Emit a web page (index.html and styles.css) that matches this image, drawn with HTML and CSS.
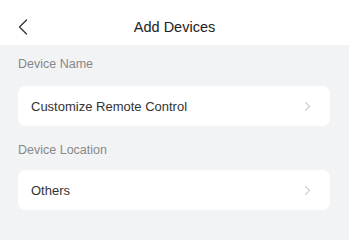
FILE: index.html
```
<!DOCTYPE html>
<html lang="en">
<head>
<meta charset="utf-8">
<title>Add Devices</title>
<link rel="stylesheet" href="styles.css">
</head>
<body>
<div class="page">
  <header class="navbar">
    <div class="nav-left">
      <svg class="back" width="10" height="16" viewBox="0 0 10 16" aria-hidden="true">
        <path d="M8.5 1 L1.5 8 L8.5 15" fill="none" stroke="#333" stroke-width="1.3" stroke-linecap="round" stroke-linejoin="round"/>
      </svg>
    </div>
    <div class="title">Add Devices</div>
    <div class="nav-right"></div>
  </header>
  <section class="group">
    <div class="group-label">Device Name</div>
    <div class="cell">
      <span class="cell-text">Customize Remote Control</span>
      <svg class="arrow" width="7" height="11" viewBox="0 0 7 11" aria-hidden="true">
        <path d="M1.5 1.5 L5.5 5.5 L1.5 9.5" fill="none" stroke="#cfcfcf" stroke-width="1.1" stroke-linecap="round" stroke-linejoin="round"/>
      </svg>
    </div>
  </section>
  <section class="group group-second">
    <div class="group-label">Device Location</div>
    <div class="cell">
      <span class="cell-text">Others</span>
      <svg class="arrow" width="7" height="11" viewBox="0 0 7 11" aria-hidden="true">
        <path d="M1.5 1.5 L5.5 5.5 L1.5 9.5" fill="none" stroke="#cfcfcf" stroke-width="1.1" stroke-linecap="round" stroke-linejoin="round"/>
      </svg>
    </div>
  </section>
</div>
</body>
</html>
```
FILE: styles.css
```
html, body {
  margin: 0;
  padding: 0;
}
body {
  background: #f2f3f5;
  font-family: "Liberation Sans", Arial, sans-serif;
  color: #333;
}
.page {
  min-height: 236px;
}
.navbar {
  height: 45px;
  box-sizing: border-box;
  padding-top: 8px;
  background: #fff;
  display: grid;
  grid-template-columns: 1fr auto 1fr;
  align-items: center;
}
.nav-left {
  padding-left: 18px;
  display: flex;
  align-items: center;
}
.back {
  display: block;
}
.title {
  font-size: 14.5px;
  color: #222;
}
.group-label {
  font-size: 12.5px;
  line-height: 17px;
  color: #888;
  padding: 11px 18px 13px;
}
.group-second .group-label {
  padding-top: 16px;
  padding-bottom: 11px;
}
.cell {
  margin: 0 19px 0 18px;
  height: 40px;
  background: #fff;
  border-radius: 7px;
  display: flex;
  align-items: center;
  justify-content: space-between;
  padding: 0 19px 0 13px;
}
.cell-text {
  font-size: 13px;
  color: #333;
  padding-top: 1px;
}
.arrow {
  display: block;
}
```
